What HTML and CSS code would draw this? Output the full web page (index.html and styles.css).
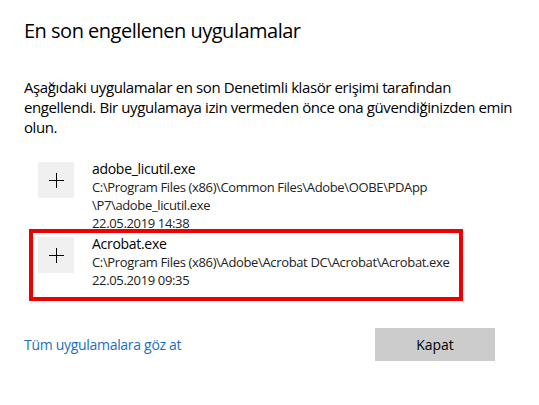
FILE: index.html
```html
<!DOCTYPE html>
<html lang="tr">
<head>
<meta charset="utf-8">
<title>En son engellenen uygulamalar</title>
<link rel="stylesheet" href="styles.css">
</head>
<body>
<main class="dialog">
  <h1 class="title">En son engellenen uygulamalar</h1>
  <p class="desc">Aşağıdaki uygulamalar en son Denetimli klasör erişimi tarafından engellendi. Bir uygulamaya izin vermeden önce ona güvendiğinizden emin olun.</p>
  <ul class="apps">
    <li class="app">
      <div class="app-icon">
        <svg width="15" height="15" viewBox="0 0 15 15"><path d="M7.5 0V15M0 7.5H15" stroke="#000" stroke-width="1" fill="none"/></svg>
      </div>
      <div class="app-info">
        <div class="app-name">adobe_licutil.exe</div>
        <div class="app-path">C:\Program Files (x86)\Common Files\Adobe\OOBE\PDApp<br>\P7\adobe_licutil.exe</div>
        <div class="app-date">22.05.2019 14:38</div>
      </div>
    </li>
    <li class="app app-marked">
      <div class="app-icon">
        <svg width="15" height="15" viewBox="0 0 15 15"><path d="M7.5 0V15M0 7.5H15" stroke="#000" stroke-width="1" fill="none"/></svg>
      </div>
      <div class="app-info">
        <div class="app-name">Acrobat.exe</div>
        <div class="app-path">C:\Program Files (x86)\Adobe\Acrobat DC\Acrobat\Acrobat.exe</div>
        <div class="app-date">22.05.2019 09:35</div>
      </div>
    </li>
  </ul>
  <div class="footer">
    <a class="link" href="#">Tüm uygulamalara göz at</a>
    <button class="close-btn" type="button">Kapat</button>
  </div>
</main>
</body>
</html>
```
FILE: styles.css
```css
html, body {
  margin: 0;
  padding: 0;
  background: #ffffff;
}

body {
  font-family: "Open Sans", "Noto Sans", "Liberation Sans", sans-serif;
  color: #000000;
}

.dialog {
  width: 471px;
  padding: 17px 0 0 24px;
}

.title {
  margin: 0;
  font-size: 20px;
  font-weight: 400;
  line-height: 28px;
  letter-spacing: -0.5px;
}

.desc {
  margin: 32px 0 0 0;
  width: 492px;
  font-size: 15px;
  line-height: 20px;
  letter-spacing: -0.4px;
}

.apps {
  list-style: none;
  margin: 22px 0 0 0;
  padding: 0 0 0 14px;
  display: flex;
  flex-direction: column;
  gap: 2px;
}

.app {
  display: flex;
  gap: 18px;
  position: relative;
}

.app-icon {
  width: 36px;
  height: 36px;
  margin-top: 3px;
  background: #f0f0f0;
  display: flex;
  align-items: center;
  justify-content: center;
  flex: none;
}

.app-icon svg {
  display: block;
}

.app-info {
  display: flex;
  flex-direction: column;
}

.app-name {
  font-size: 14px;
  line-height: 19px;
  letter-spacing: -0.3px;
}

.app-path,
.app-date {
  font-size: 13px;
  line-height: 18px;
  color: #222222;
  letter-spacing: -0.35px;
}

.app-marked::after {
  content: "";
  position: absolute;
  top: -5px;
  left: -9px;
  width: 426px;
  height: 64px;
  border: 4px solid #ee0000;
}

.footer {
  margin-top: 39px;
  display: flex;
  align-items: center;
  justify-content: space-between;
}

.link {
  color: #1a6fc0;
  text-decoration: none;
  font-size: 14px;
  letter-spacing: -0.3px;
}

.close-btn {
  width: 120px;
  height: 33px;
  border: none;
  background: #cccccc;
  color: #000000;
  font-family: inherit;
  font-size: 14px;
  padding: 0;
}
```
